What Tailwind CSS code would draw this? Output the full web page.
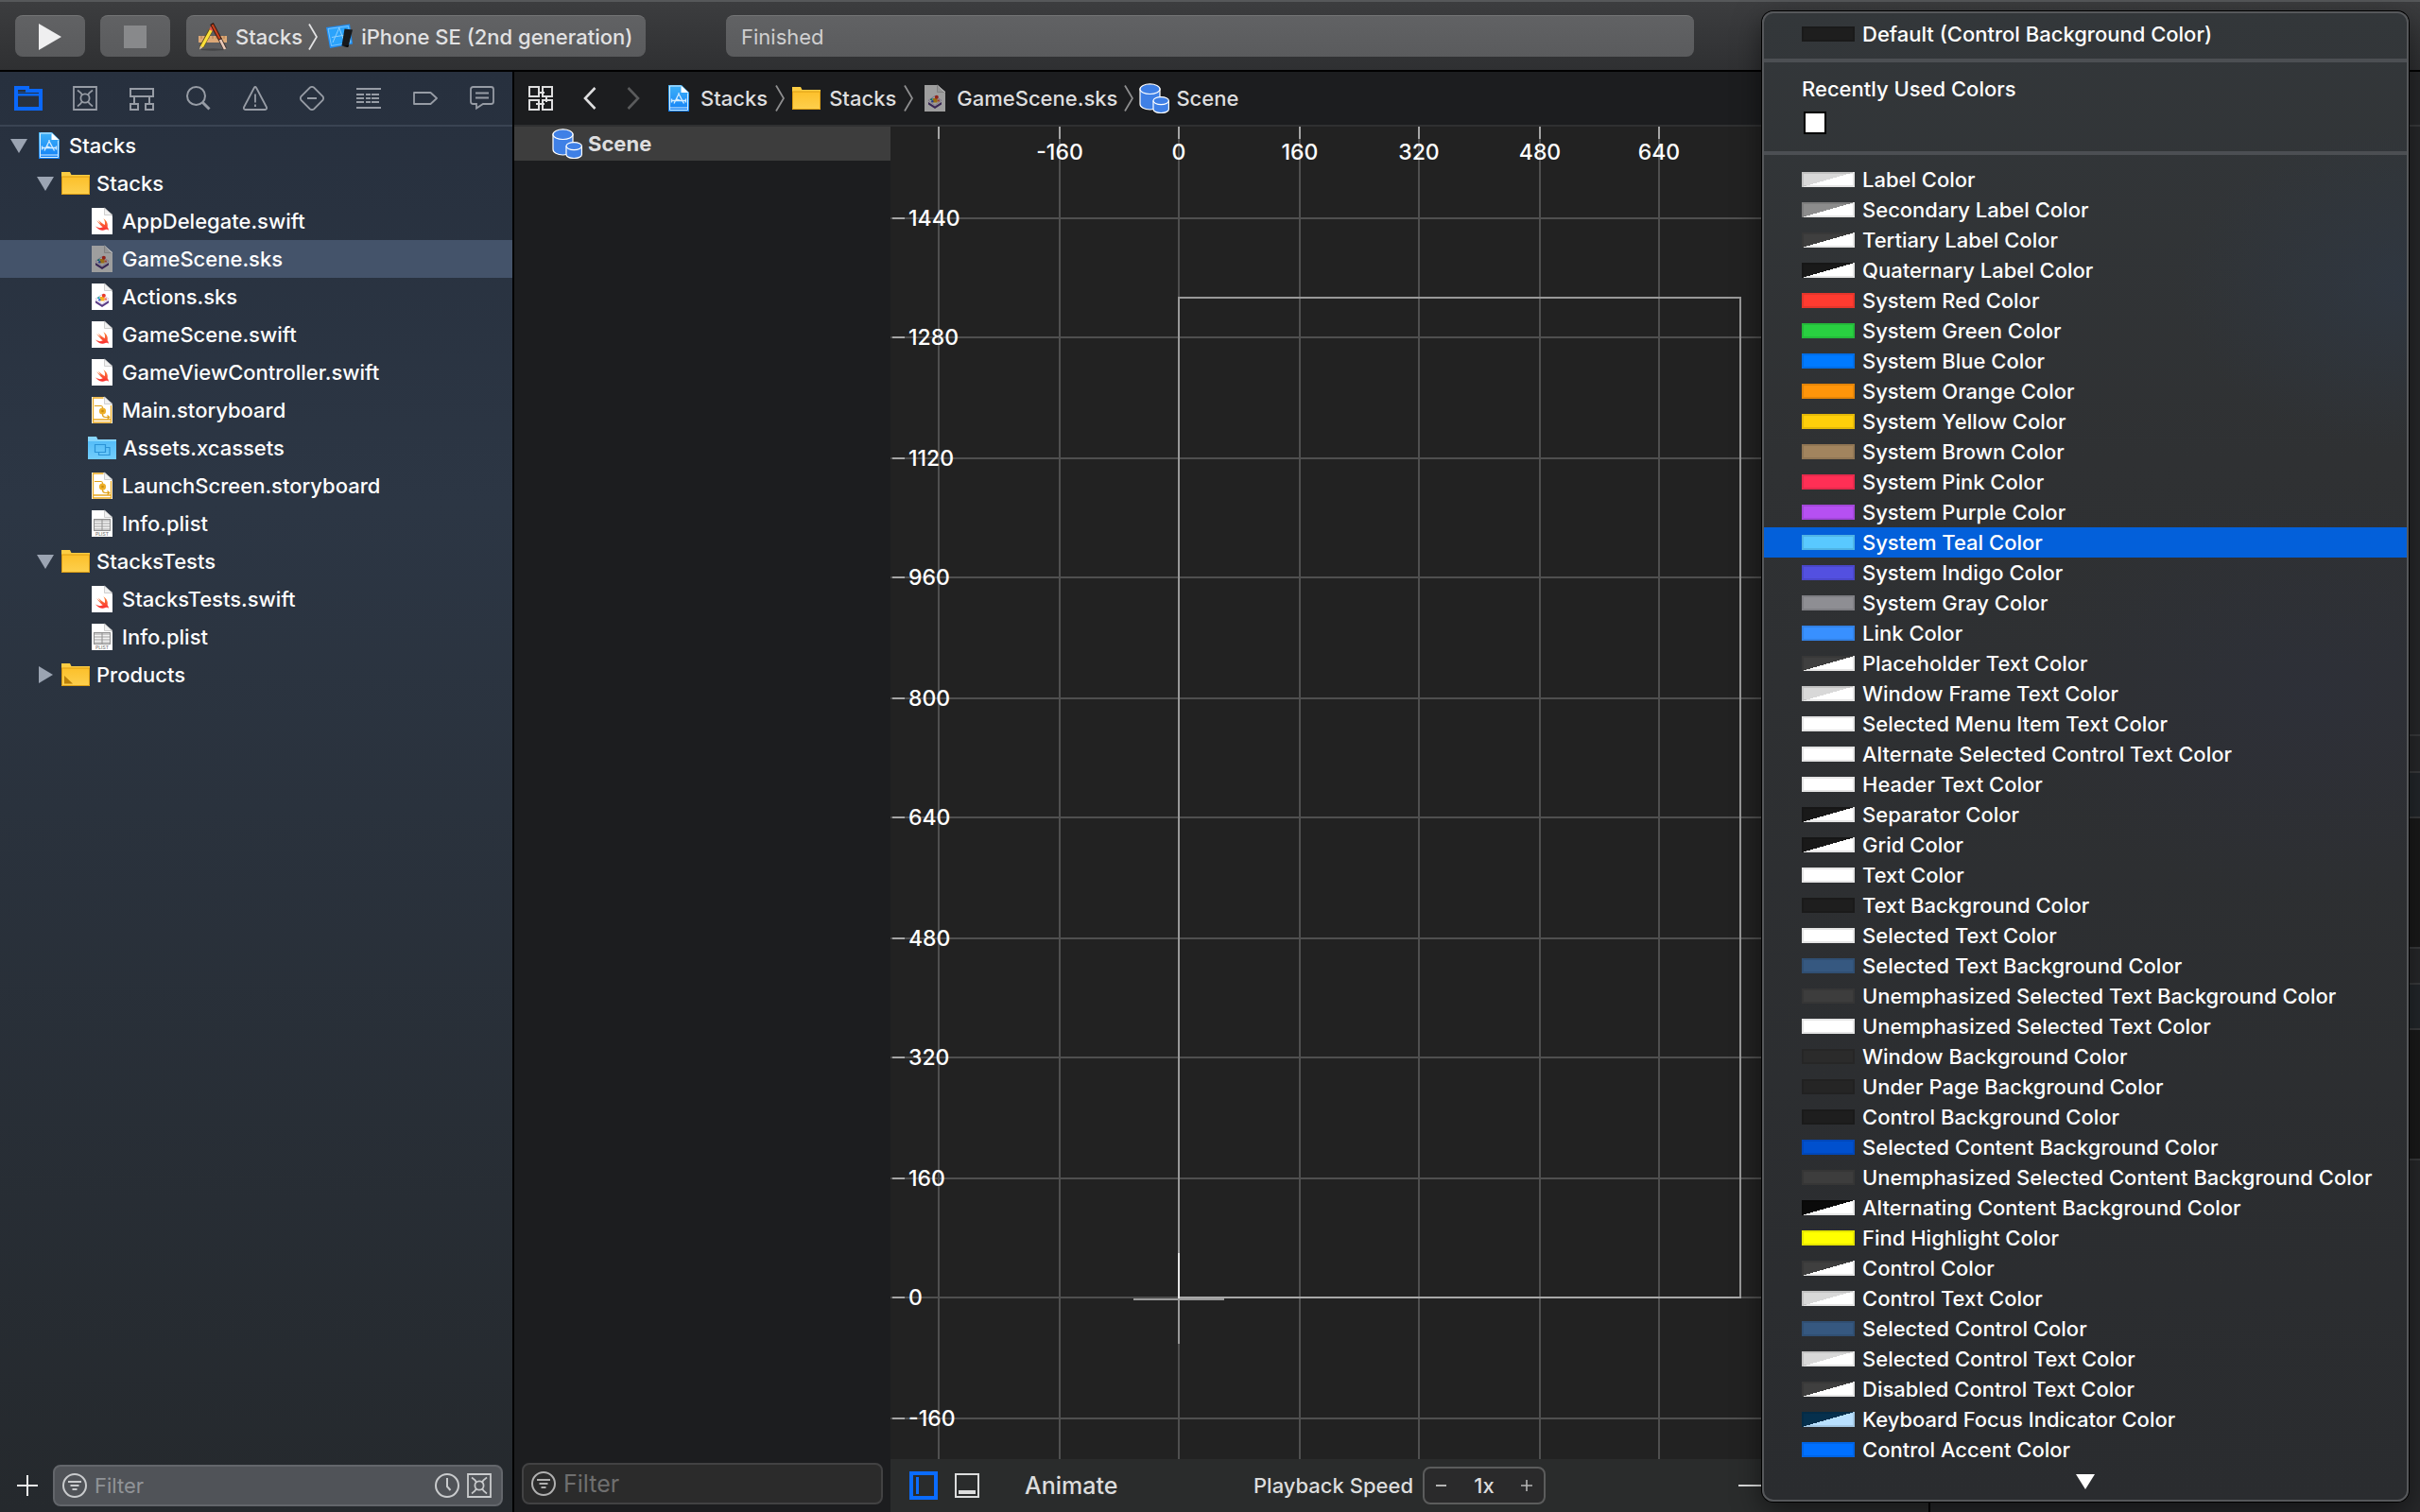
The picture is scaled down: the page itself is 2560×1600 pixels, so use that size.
<!DOCTYPE html>
<html lang="en">
<head>
<meta charset="utf-8">
<title>Stacks — GameScene.sks</title>
<script src="https://cdn.jsdelivr.net/npm/@tailwindcss/browser@4"></script>
</head>
<body class="h-screen overflow-hidden bg-[#1e1f20] font-[Inter,'Liberation_Sans',sans-serif] text-[22px] leading-8 font-medium text-white">

<svg class="absolute size-0" aria-hidden="true">
  <defs>
    <linearGradient id="gFolder" x1="0" y1="0" x2="0" y2="1"><stop offset="0" stop-color="#fcc02b"/><stop offset="1" stop-color="#fdd04e"/></linearGradient>
    <linearGradient id="gProj" x1="0" y1="0" x2="0" y2="1"><stop offset="0" stop-color="#3fb2f8"/><stop offset="1" stop-color="#1280f7"/></linearGradient>
    <linearGradient id="gSwift" x1="0" y1="0" x2="0" y2="1"><stop offset="0" stop-color="#fb8a3a"/><stop offset="1" stop-color="#fa2a2f"/></linearGradient>
    <linearGradient id="gAsset" x1="0" y1="0" x2="0" y2="1"><stop offset="0" stop-color="#55bdf8"/><stop offset="1" stop-color="#72cdfb"/></linearGradient>
  </defs>
  <symbol id="proj" viewBox="0 0 22 30">
    <path d="M0 1h14l8 8v20H0z" fill="url(#gProj)"/>
    <path d="M13.500 1.500v7.500h8z" fill="#fff"/>
    <path d="M13 2H1.500v25.500h19V9.500M1.500 25h19" fill="none" stroke="#d6edff" stroke-width="1"/>
    <path d="M11.500 9.500L6 20.500M10.500 9.500l6 11M3 17.500h16M3.500 15.500v4M18.500 15.500v4M8 15.500l8 3" fill="none" stroke="#d6edff" stroke-width="1.300"/>
  </symbol>
  <symbol id="paper" viewBox="0 0 22 30">
    <path d="M0 1h13.500L22 9.500V29H0z" fill="#fff"/>
    <path d="M13.500 1v7.500H22z" fill="#f1f1f1" stroke="#c4c4c4" stroke-width=".8"/>
  </symbol>
  <symbol id="swift" viewBox="0 0 22 30">
    <use href="#paper"/>
    <g transform="translate(2.400 10.200) scale(.7)"><path fill="url(#gSwift)" d="M17.090 19.720C14.730 21.080 11.500 21.220 8.230 19.820A13.820 13.820 0 0 1 2 14.500C2.670 15.050 3.460 15.500 4.300 15.900C7.670 17.470 11.030 17.360 13.400 15.900C10.030 13.310 7.160 9.940 5.030 7.190C4.580 6.740 4.250 6.180 3.910 5.680C12.190 11.730 11.830 13.270 6.320 4.670C11.210 9.610 15.750 12.410 15.750 12.410C15.910 12.500 16 12.570 16.110 12.630C16.210 12.380 16.300 12.120 16.370 11.850C17.160 9 16.260 5.730 14.290 3.040C18.840 5.790 21.540 10.950 20.410 15.280C20.380 15.390 20.350 15.500 20.360 15.670C22.600 18.500 22 21.450 21.710 20.890C20.500 18.500 18.230 19.240 17.090 19.720"/></g>
  </symbol>
  <symbol id="sksArt" viewBox="0 0 22 30">
    <path d="M4 19l7 4.500 7-4.500v2.500L11 26l-7-4.500z" fill="#5b3c86"/>
    <path d="M11 12.500l7 4.700-7 5.300-7-5.300z" fill="#fff" stroke="#b9a5cf" stroke-width=".6"/>
    <rect x="9" y="15" width="4.500" height="4.500" fill="#f6b221"/>
    <circle cx="12.800" cy="13.800" r="2" fill="#e8392b"/>
    <path d="M6 16l2.500-1.500V17H6z" fill="#23a7a3"/>
    <circle cx="8.300" cy="18.200" r="1.200" fill="#3b62d8"/>
    <path d="M13.500 16.500h2.400v2h-2.400z" fill="#f0624d"/>
  </symbol>
  <symbol id="sks" viewBox="0 0 22 30"><use href="#paper"/><use href="#sksArt"/></symbol>
  <symbol id="sksDim" viewBox="0 0 22 30"><use href="#paper"/><use href="#sksArt"/><path d="M0 1h13.500L22 9.500V29H0z" fill="#000" fill-opacity=".38"/></symbol>
  <symbol id="story" viewBox="0 0 22 30">
    <use href="#paper"/>
    <path d="M12.500 2H1.500v26h19V10M1.500 25h19" fill="none" stroke="#e9a820" stroke-width="1.300"/>
    <path d="M3 10.500h7q1.500 0 1.500 2v7q0 3 3 3h4M16.500 20.500l2.200 2-2.200 2" fill="none" stroke="#e0a018" stroke-width="1.200"/>
    <circle cx="11.500" cy="16" r="3.600" fill="#eeb02a"/><circle cx="11.500" cy="16" r="1.300" fill="#c98d10"/>
  </symbol>
  <symbol id="plist" viewBox="0 0 22 30">
    <use href="#paper"/>
    <rect x="2.500" y="10.500" width="17" height="12" fill="#c9c9c9" stroke="#8f8f8f"/>
    <path d="M3 13.500h16M3 16.500h16M3 19.500h16" stroke="#f3f3f3" stroke-width="1"/><path d="M11 11v11" stroke="#8f8f8f" stroke-width="1"/>
  </symbol>
  <symbol id="folder" viewBox="0 0 30 24">
    <path d="M0 0h9l1.500 3H30v21H0z" fill="#fdcd43"/>
    <path d="M0 5h30v19H0z" fill="url(#gFolder)"/>
    <path d="M0 5h30M.5 5v18.500h29V5" fill="none" stroke="#dc9d12" stroke-width="1"/>
  </symbol>
  <symbol id="folderP" viewBox="0 0 30 24"><use href="#folder"/><path d="M3 13l9 8.500H3z" fill="#b9800b"/></symbol>
  <symbol id="assets" viewBox="0 0 30 24">
    <path d="M0 0h9l1.500 3H30v21H0z" fill="#86d5fc"/>
    <path d="M0 5h30v19H0z" fill="url(#gAsset)"/>
    <path d="M7.500 8.500h11v8h-11zM19 11.500h4v8H11.500V17" fill="none" stroke="#2b93d6" stroke-width="1.200"/>
  </symbol>
  <symbol id="scene" viewBox="0 0 32 32">
    <path d="M1 6v16c0 3.400 4.700 6 10.500 6S22 25.400 22 22V6z" fill="#3f80e6" stroke="#fff" stroke-width="1.200"/>
    <ellipse cx="11.500" cy="6.200" rx="10.500" ry="5.300" fill="#3f80e6" stroke="#fff" stroke-width="1.200"/>
    <path d="M15 19v8.500c0 2.300 3.600 4 8.200 4s8.200-1.700 8.200-4V19z" fill="#3f80e6" stroke="#fff" stroke-width="1.200"/>
    <ellipse cx="23.200" cy="18.600" rx="8.200" ry="4" fill="#3f80e6" stroke="#fff" stroke-width="1.200"/>
  </symbol>
  <symbol id="chev" viewBox="0 0 10 28"><path d="M1 .5l8 13.500-8 13.500" fill="none" stroke="currentColor" stroke-width="1.800"/></symbol>
  <symbol id="down" viewBox="0 0 18 15"><path d="M0 0h18L9 15z" fill="#9ba4b2"/></symbol>
  <symbol id="right" viewBox="0 0 15 18"><path d="M0 0v18l15-9z" fill="#9ba4b2"/></symbol>
  <symbol id="xbox" viewBox="0 0 26 26"><g fill="none" stroke="currentColor" stroke-width="1.800"><path d="M1 1h24v24H1z"/><circle cx="13" cy="13" r="4.600"/><path d="M5 4.500q4 2.500 5 5.500M21 4.500q-4 2.500-5 5.500M5 21.500q4-2.500 5-5.500M21 21.500q-4-2.500-5-5.500"/></g></symbol>
  <symbol id="filter" viewBox="0 0 26 26"><g fill="none" stroke="currentColor" stroke-width="2"><circle cx="13" cy="13" r="12"/><path d="M6 9h14M8.500 13h9M10.500 17h5"/></g></symbol>
</svg>

<div class="flex h-full flex-col">

  <header class="flex h-[76px] shrink-0 items-center border-t-2 border-b-2 border-t-[#56585a] border-b-black bg-linear-to-b from-[#3c3d3f] to-[#2f3032] px-4 text-[#e2e2e3]">
    <button aria-label="Run" class="flex h-11 w-[74px] items-center justify-center rounded-lg border-t border-[#747576] bg-linear-to-b from-[#616264] to-[#5a5b5d]"><svg class="h-7 w-6" viewBox="0 0 24 28"><path d="M0 0v28l24-14z" fill="#efeff0"/></svg></button>
    <button aria-label="Stop" class="ml-4 flex h-11 w-[74px] items-center justify-center rounded-lg border-t border-[#747576] bg-linear-to-b from-[#616264] to-[#5a5b5d]"><span class="size-6 bg-[#88898b]"></span></button>
    <div class="ml-[17px] flex h-11 w-[486px] shrink-0 items-center rounded-lg border-t border-[#747576] bg-linear-to-b from-[#616264] to-[#5a5b5d] pl-3">
      <svg class="h-[30px] w-[32px]" viewBox="0 0 32 30">
        <path d="M1 14h30v7H1z" fill="#dca876"/><path d="M4 14v3M8 14v3M12 14v3M16 14v3M20 14v3M24 14v3M28 14v3" stroke="#a87445" stroke-width=".8"/>
        <ellipse cx="16" cy="28.500" rx="13" ry="1.200" fill="#000" fill-opacity=".25"/>
        <path d="M14.500 7L4 26" stroke="#5b4a12" stroke-width="4.600"/><path d="M14.500 7.500L4.500 25.500" stroke="#fbe13a" stroke-width="3.200"/>
        <path d="M16 4.500l-2 3.500" stroke="#e2574a" stroke-width="4"/><path d="M2 28.500l1-4 2.500 1.600z" fill="#efd3a8"/>
        <path d="M15 1l9 17" stroke="#2b130c" stroke-width="4"/><path d="M15.500 2l8.500 16" stroke="#c3401c" stroke-width="2.400"/>
        <path d="M23.500 17l5.500 10.500" stroke="#3a2a25" stroke-width="4"/><path d="M24 18l5 10" stroke="#e9c9b8" stroke-width="2.600"/>
      </svg>
      <button class="ml-2">Stacks</button>
      <svg class="ml-1.5 h-7 w-2.5 text-[#e2e2e3]"><use href="#chev"/></svg>
      <svg class="ml-2 h-7 w-[30px]" viewBox="0 0 30 28">
        <path d="M1 4l25-3.500 3 21L5 26z" fill="#1f8ff5"/><path d="M3 5.500l21.500-3L27 20 6.500 23.500z" fill="#2ba3fb" stroke="#8fd1ff" stroke-width=".8"/>
        <path d="M15 4L8 20M14.500 4l5 13M7 14.500l14-2.500" fill="none" stroke="#8fd1ff" stroke-width="1"/>
        <path d="M20.500 5.500l8.500 1-4.500 18-7-1z" fill="#17191c"/><path d="M19 24l5 1 1-2z" fill="#000"/>
      </svg>
      <button class="ml-2 whitespace-nowrap">iPhone SE (2nd generation)</button>
    </div>
    <div class="ml-[85px] flex h-11 w-[1024px] items-center rounded-lg border-t border-[#747576] bg-linear-to-b from-[#616264] to-[#5a5b5d] px-4 font-normal text-[#cfcfd0]">Finished</div>
  </header>

  <div class="flex min-h-0 flex-1">

    <nav class="flex w-[544px] shrink-0 flex-col border-r-2 border-black bg-linear-to-b from-[#27303e] via-[#2c3644] via-30% to-[#25292d]">
      <div class="flex h-[58px] shrink-0 items-center border-b-2 border-[#3a4453] text-[#979ca5]">
        <button aria-label="Project" class="flex w-[60px] justify-center"><svg class="h-[26px] w-[30px]" viewBox="0 0 30 26"><path d="M2 24V2h12v3h14v19zM2 8.500h26" fill="none" stroke="#0a68fb" stroke-width="4"/><path d="M4 7.500h22" stroke="#27303e" stroke-width="1"/></svg></button>
        <button aria-label="Source control" class="flex w-[60px] justify-center"><svg class="size-[26px]"><use href="#xbox"/></svg></button>
        <button aria-label="Symbols" class="flex w-[60px] justify-center"><svg class="size-[26px]" viewBox="0 0 26 26" fill="none" stroke="currentColor" stroke-width="2"><path d="M1 3h24v8H1zM1 19h8v6H1zM17 19h8v6h-8zM5 11v8M21 11v8"/></svg></button>
        <button aria-label="Find" class="flex w-[60px] justify-center"><svg class="size-[26px]" viewBox="0 0 26 26" fill="none" stroke="currentColor" stroke-width="2"><circle cx="10.500" cy="10.500" r="9.500"/><path d="M17 17l7.500 7.500" stroke-width="3"/></svg></button>
        <button aria-label="Issues" class="flex w-[60px] justify-center"><svg class="size-[26px]" viewBox="0 0 26 26" fill="none" stroke="currentColor" stroke-width="1.800" stroke-linejoin="round"><path d="M11.800 2q1.200-2 2.400 0L25 22.500q.5 2.500-1.500 2.500h-21Q.5 25 1 22.500zM13 8.500v9M13 19.500v2.500"/></svg></button>
        <button aria-label="Tests" class="flex w-[60px] justify-center"><svg class="size-[26px]" viewBox="0 0 26 26" fill="none" stroke="currentColor" stroke-width="1.800"><path d="M11 1.500q2-1.200 4 0L24.500 11q1.200 2 0 4L15 24.500q-2 1.200-4 0L1.500 15q-1.200-2 0-4zM8 13h10"/></svg></button>
        <button aria-label="Debug" class="flex w-[60px] justify-center"><svg class="size-[26px]" viewBox="0 0 26 26" fill="none" stroke="currentColor" stroke-width="2"><path d="M0 3h26M0 23h26"/><path d="M0 9h26M0 13h26M0 17h26" stroke-dasharray="8 2 5 1"/></svg></button>
        <button aria-label="Breakpoints" class="flex w-[60px] justify-center"><svg class="size-[26px]" viewBox="0 0 26 26" fill="none" stroke="currentColor" stroke-width="1.800" stroke-linejoin="round"><path d="M1 7h17.500l6.500 6-6.500 6H1z"/></svg></button>
        <button aria-label="Reports" class="flex w-[60px] justify-center"><svg class="size-[26px]" viewBox="0 0 26 26" fill="none" stroke="currentColor" stroke-width="1.800"><path d="M3.500 1h19Q25 1 25 3.500v13q0 2.500-2.500 2.500H14l-7 4.500V19H3.500Q1 19 1 16.500v-13Q1 1 3.500 1zM6 7.500h14M6 12.500h14"/></svg></button>
      </div>

      <ul class="flex-1">
        <li class="flex h-10 items-center pl-[11px]"><svg class="h-[15px] w-[18px]"><use href="#down"/></svg><svg class="mr-[10px] ml-3 h-[30px] w-[22px]"><use href="#proj"/></svg>Stacks</li>
        <li class="flex h-10 items-center pl-[39px]"><svg class="h-[15px] w-[18px]"><use href="#down"/></svg><svg class="mr-[7px] ml-2 h-6 w-[30px]"><use href="#folder"/></svg>Stacks</li>
        <li class="flex h-10 items-center pl-[97px]"><svg class="mr-[10px] h-[30px] w-[22px]"><use href="#swift"/></svg>AppDelegate.swift</li>
        <li class="flex h-10 items-center bg-[#44536a] pl-[97px]"><svg class="mr-[10px] h-[30px] w-[22px]"><use href="#sksDim"/></svg>GameScene.sks</li>
        <li class="flex h-10 items-center pl-[97px]"><svg class="mr-[10px] h-[30px] w-[22px]"><use href="#sks"/></svg>Actions.sks</li>
        <li class="flex h-10 items-center pl-[97px]"><svg class="mr-[10px] h-[30px] w-[22px]"><use href="#swift"/></svg>GameScene.swift</li>
        <li class="flex h-10 items-center pl-[97px]"><svg class="mr-[10px] h-[30px] w-[22px]"><use href="#swift"/></svg>GameViewController.swift</li>
        <li class="flex h-10 items-center pl-[97px]"><svg class="mr-[10px] h-[30px] w-[22px]"><use href="#story"/></svg>Main.storyboard</li>
        <li class="flex h-10 items-center pl-[93px]"><svg class="mr-[7px] h-6 w-[30px]"><use href="#assets"/></svg>Assets.xcassets</li>
        <li class="flex h-10 items-center pl-[97px]"><svg class="mr-[10px] h-[30px] w-[22px]"><use href="#story"/></svg>LaunchScreen.storyboard</li>
        <li class="flex h-10 items-center pl-[97px]"><svg class="mr-[10px] h-[30px] w-[22px]"><use href="#plist"/><text x="11" y="28" font-size="5" text-anchor="middle" fill="#777">PLIST</text></svg>Info.plist</li>
        <li class="flex h-10 items-center pl-[39px]"><svg class="h-[15px] w-[18px]"><use href="#down"/></svg><svg class="mr-[7px] ml-2 h-6 w-[30px]"><use href="#folder"/></svg>StacksTests</li>
        <li class="flex h-10 items-center pl-[97px]"><svg class="mr-[10px] h-[30px] w-[22px]"><use href="#swift"/></svg>StacksTests.swift</li>
        <li class="flex h-10 items-center pl-[97px]"><svg class="mr-[10px] h-[30px] w-[22px]"><use href="#plist"/><text x="11" y="28" font-size="5" text-anchor="middle" fill="#777">PLIST</text></svg>Info.plist</li>
        <li class="flex h-10 items-center pl-[41px]"><svg class="h-[18px] w-[15px]"><use href="#right"/></svg><svg class="mr-[7px] ml-[9px] h-6 w-[30px]"><use href="#folderP"/></svg>Products</li>
      </ul>

      <div class="flex h-14 items-center pr-2.5 pl-[18px]">
        <button aria-label="Add"><svg class="size-[22px]" viewBox="0 0 22 22"><path d="M11 0v22M0 11h22" stroke="#f0f0f0" stroke-width="2"/></svg></button>
        <label class="ml-4 flex h-11 min-w-0 flex-1 items-center rounded-lg border-2 border-[#63666b] bg-[#505358] pr-2.5 pl-2 text-[#c9cbcd]">
          <svg class="size-[26px] shrink-0"><use href="#filter"/></svg>
          <input aria-label="Filter files" placeholder="Filter" class="ml-2 min-w-0 flex-1 bg-transparent font-normal outline-none placeholder:text-[#909397]">
          <svg class="size-[26px] shrink-0" viewBox="0 0 26 26" fill="none" stroke="currentColor" stroke-width="2"><circle cx="13" cy="13" r="12"/><path d="M13 5v9l3.500 4"/></svg>
          <svg class="ml-2 size-[26px] shrink-0"><use href="#xbox"/></svg>
        </label>
      </div>
    </nav>

    <main class="flex min-w-0 flex-1 flex-col">
      <div class="flex h-[58px] shrink-0 items-center border-b-2 border-[#2f3031] bg-[#1c1d1f] pl-[15px] text-[#dededf]">
        <button aria-label="Related items"><svg class="size-[26px]" viewBox="0 0 26 26" fill="none" stroke="currentColor" stroke-width="2"><path d="M1 1h10v10H1zM15 1h10v10H15zM1 15h10v10H1zM15 15h10v10H15zM11 7h6M19 11v6M8 19h9"/></svg></button>
        <button aria-label="Back" class="ml-8"><svg class="h-6 w-3.5" viewBox="0 0 14 24"><path d="M12.500 1L2 12l10.500 11" fill="none" stroke="currentColor" stroke-width="2.600"/></svg></button>
        <button aria-label="Forward" class="mr-[30px] ml-8"><svg class="h-6 w-3.5" viewBox="0 0 14 24"><path d="M1.500 1L12 12 1.500 23" fill="none" stroke="#5a5b5c" stroke-width="2.600"/></svg></button>
        <svg class="mr-3 h-[30px] w-[22px]"><use href="#proj"/></svg><a href="#p">Stacks</a>
        <svg class="mx-2 h-7 w-2.5 text-[#8e8e8f]"><use href="#chev"/></svg>
        <svg class="mr-[9px] h-6 w-[30px]"><use href="#folder"/></svg><a href="#f">Stacks</a>
        <svg class="mr-3 ml-2 h-7 w-2.5 text-[#8e8e8f]"><use href="#chev"/></svg>
        <svg class="mr-3 h-[30px] w-[22px]"><use href="#sksDim"/></svg><a href="#g">GameScene.sks</a>
        <svg class="mr-1.5 ml-[7px] h-7 w-2.5 text-[#8e8e8f]"><use href="#chev"/></svg>
        <svg class="mr-[7px] size-8"><use href="#scene"/></svg><a href="#s">Scene</a>
      </div>

      <div class="flex min-h-0 flex-1">
        <section class="flex w-[398px] shrink-0 flex-col bg-[#1c1d1f]">
          <div class="flex h-9 items-center bg-[#3d3d3d] pl-10 font-bold text-[#dededf]"><svg class="mr-1.5 size-8"><use href="#scene"/></svg>Scene</div>
          <div class="mt-auto flex h-[60px] items-center px-2">
            <label class="flex h-11 w-full items-center rounded-lg border-2 border-[#424243] bg-[#2b2b2b] px-2 text-[#b0b0b0]">
              <svg class="size-[26px] shrink-0"><use href="#filter"/></svg>
              <input aria-label="Filter scene" placeholder="Filter" class="ml-2 min-w-0 flex-1 bg-transparent text-[25px] font-normal outline-none placeholder:text-[#6f6f6f]">
            </label>
          </div>
        </section>

        <section class="flex min-w-0 flex-1 flex-col">
          <svg id="canvas" class="min-h-0 w-full flex-1 bg-[#222222] text-[23px]"></svg>
          <div class="flex h-14 shrink-0 items-center bg-[#2a2c2c] pl-5 text-[#dcdddd]">
            <button aria-label="Toggle outline"><svg class="size-[30px]" viewBox="0 0 30 30" fill="none" stroke="#0a6cff"><path d="M2 2h26v26H2z" stroke-width="4"/><path d="M8.500 6v18" stroke-width="3"/></svg></button>
            <button aria-label="Toggle timeline" class="ml-[18px]"><svg class="size-[26px]" viewBox="0 0 26 26" fill="none" stroke="currentColor"><path d="M1 1h24v24H1z" stroke-width="2"/><path d="M4 20h18" stroke-width="4"/></svg></button>
            <button class="ml-12 w-[242px] text-left text-[25px]">Animate</button>
            <span class="w-[179px] whitespace-nowrap">Playback Speed</span>
            <div class="flex h-10 w-[130px] items-center justify-between rounded-lg border-2 border-[#5b5c5c] bg-[#2a2a2b] px-3">
              <button aria-label="Slower"><svg class="size-3" viewBox="0 0 12 12"><path d="M0 6h11" stroke="#b5b5b5" stroke-width="2"/></svg></button>
              <output>1x</output>
              <button aria-label="Faster"><svg class="size-3" viewBox="0 0 12 12"><path d="M0 6h12M6 0v12" stroke="#b5b5b5" stroke-width="1.600"/></svg></button>
            </div>
            <span class="ml-[204px] h-0.5 w-[120px] bg-[#dcdddd]"></span>
          </div>
        </section>
      </div>
    </main>

    <aside class="flex w-[520px] shrink-0 flex-col border-l-2 border-black bg-[#27282a]">
      <div class="h-[58px] shrink-0 border-b-2 border-[#3a3b3d]"></div>
      <div class="h-[645px] shrink-0 border-b-2 border-[#3a3b3d]"></div>
      <div class="h-[39px] shrink-0 border-b-2 border-[#3a3b3d]"></div>
      <div class="h-12 shrink-0 border-b-2 border-[#3a3b3d] bg-[#23272b]"></div>
      <div class="h-[138px] shrink-0 border-b-2 border-[#3a3b3d] bg-[#1a1a1a]"></div>
      <div class="h-[38px] shrink-0 border-b-2 border-[#3a3b3d]"></div>
      <div class="h-12 shrink-0 border-b-2 border-[#3a3b3d] bg-[#23272b]"></div>
      <div class="h-[138px] shrink-0 border-b-2 border-[#3a3b3d] bg-[#1a1a1a]"></div>
    </aside>
  </div>
</div>

<div class="absolute top-3 right-3 w-[684px] overflow-hidden rounded-xl border-2 border-[#56585b] bg-linear-to-b from-[#33373a] via-[#2f3133] via-30% to-[#2a2c2f] shadow-[0_0_0_1px_#000,0_10px_30px_rgba(0,0,0,0.500)]">
  <div class="pointer-events-none absolute inset-0 bg-[radial-gradient(240px_170px_at_100%_290px,#2e394899,transparent),radial-gradient(300px_220px_at_85%_720px,#2d303c99,transparent)]"></div>
  <div role="menu" aria-label="Background color" class="relative flex flex-col pt-1.5 pb-[11px]">
    <button role="menuitem" class="flex h-8 items-center pl-10 text-left"><span class="mr-2 h-4 w-14 border-2 border-black/10 bg-[#1e1e1e]"></span>Default (Control Background Color)</button>
    <hr class="mt-2.5 h-1 border-0 bg-[#4c4f53]">
    <h2 class="mt-3 pl-10">Recently Used Colors</h2>
    <button aria-label="White" class="mt-2 ml-[42px] size-6 border-2 border-black bg-white"></button>
    <hr class="mt-[18px] mb-2.5 h-1 border-0 bg-[#4c4f53]">
    <div id="colors" class="flex flex-col"></div>
    <svg class="mx-auto mt-2.5 h-4 w-5" viewBox="0 0 20 16"><path d="M0 0h20L10 16z" fill="#fff"/></svg>
  </div>
</div>

<script>
  const colors = [
    ['Label Color', '#d8d8d8', '#fff'], ['Secondary Label Color', '#8c8c8c', '#fff'],
    ['Tertiary Label Color', '#3f3f3f', '#fff'], ['Quaternary Label Color', '#191919', '#fff'],
    ['System Red Color', '#ff3b30'], ['System Green Color', '#29d041'], ['System Blue Color', '#007aff'],
    ['System Orange Color', '#ff950a'], ['System Yellow Color', '#ffcf0a'], ['System Brown Color', '#a2845e'],
    ['System Pink Color', '#ff2f55'], ['System Purple Color', '#b650f2'], ['System Teal Color', '#59c9ff'],
    ['System Indigo Color', '#5350e0'], ['System Gray Color', '#8e8e93'], ['Link Color', '#3890ff'],
    ['Placeholder Text Color', '#3f3f3f', '#fff'], ['Window Frame Text Color', '#d8d8d8', '#fff'],
    ['Selected Menu Item Text Color', '#fff'], ['Alternate Selected Control Text Color', '#fff'],
    ['Header Text Color', '#fff'], ['Separator Color', '#191919', '#fff'], ['Grid Color', '#191919', '#fff'],
    ['Text Color', '#fff'], ['Text Background Color', '#1e1e1e'], ['Selected Text Color', '#fff'],
    ['Selected Text Background Color', '#365880'], ['Unemphasized Selected Text Background Color', '#3d3d3d'],
    ['Unemphasized Selected Text Color', '#fff'], ['Window Background Color', '#2b2b2b'],
    ['Under Page Background Color', '#252525'], ['Control Background Color', '#1e1e1e'],
    ['Selected Content Background Color', '#0050ce'], ['Unemphasized Selected Content Background Color', '#3d3d3d'],
    ['Alternating Content Background Color', '#0a0a0a', '#fff'], ['Find Highlight Color', '#ffff00'],
    ['Control Color', '#3f3f3f', '#fff'], ['Control Text Color', '#d8d8d8', '#fff'],
    ['Selected Control Color', '#365880'], ['Selected Control Text Color', '#d8d8d8', '#fff'],
    ['Disabled Control Text Color', '#3f3f3f', '#fff'], ['Keyboard Focus Indicator Color', '#06304d', '#b8e0ff'],
    ['Control Accent Color', '#0070ff'],
  ];
  const selected = 'System Teal Color';
  document.getElementById('colors').innerHTML = colors.map(([name, a, b]) =>
    `<button role="menuitem" class="flex h-8 items-center pl-10 text-left whitespace-nowrap ${name === selected ? 'bg-[#0360da]' : ''}">
      <span class="mr-2 h-4 w-14 border-2 border-black/10 bg-origin-border" style="background-image:linear-gradient(to bottom right,${a} 50%,${b || a} 50%)"></span>${name}</button>`).join('');

  // Scene editor grid: positions are relative to the canvas' top left corner
  const xs = [[51, ''], [179, '-160'], [305, '0'], [433, '160'], [559, '320'], [687, '480'], [813, '640']];
  const ys = [[97, '1440'], [223, '1280'], [351, '1120'], [477, '960'], [605, '800'], [731, '640'], [859, '480'], [985, '320'], [1113, '160'], [1239, '0'], [1367, '-160']];
  const line = (x1, y1, x2, y2, c) => `<line x1="${x1}" y1="${y1}" x2="${x2}" y2="${y2}" stroke="${c}" stroke-width="2"/>`;
  let out = '';
  for (const [x] of xs) out += line(x, 0, x, '100%', '#4f4f4f') + line(x, 0, x, 13, '#a5a5a5');
  for (const [y] of ys) out += line(0, y, '100%', y, '#4f4f4f') + line(2, y, 15, y, '#a5a5a5');
  out += line(305, 180, 305, 1288, '#999999') + line(304, 181, 900, 181, '#999999') + line(899, 180, 899, 1240, '#999999');
  out += line(304, 1239, 900, 1239, '#a8a8a8') + line(257, 1241, 353, 1241, '#999999') + line(305, 1192, 305, 1240, '#e5e5e5');
  for (const [x, t] of xs) if (t) out += `<text x="${x}" y="35" text-anchor="middle" fill="#fff">${t}</text>`;
  for (const [y, t] of ys) out += `<text x="19" y="${y + 8}" fill="#fff">${t}</text>`;
  document.getElementById('canvas').innerHTML = out;
</script>
</body>
</html>
